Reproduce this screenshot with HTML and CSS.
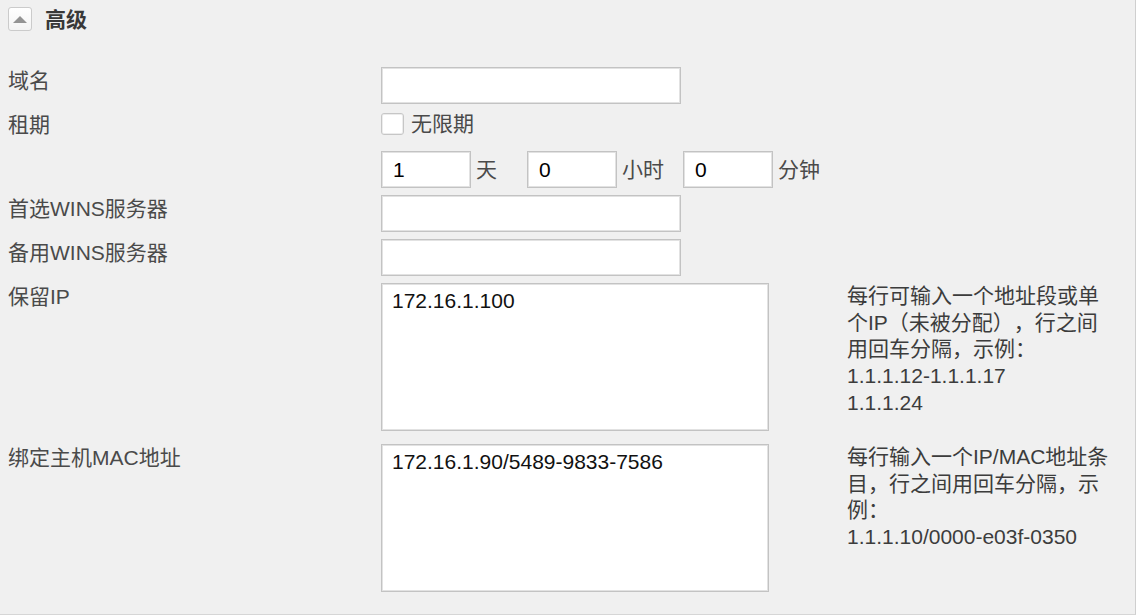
FILE: index.html
```html
<!DOCTYPE html>
<html lang="zh-CN">
<head>
<meta charset="utf-8">
<title>高级</title>
<link rel="stylesheet" href="styles.css">
</head>
<body>
<div class="panel">
  <div class="section-head">
    <span class="toggle"><span class="toggle-arrow"></span></span>
    <span class="section-title">高级</span>
  </div>

  <div class="row row-domain">
    <label class="label">域名</label>
    <div class="control"><input class="field" type="text"></div>
  </div>

  <div class="row row-lease">
    <label class="label">租期</label>
    <div class="control check-line">
      <span class="checkbox"></span>
      <span class="check-text">无限期</span>
    </div>
  </div>

  <div class="row row-time">
    <span class="label"></span>
    <div class="control time-line">
      <input class="field field-short" type="text" value="1">
      <span class="unit unit-day">天</span>
      <input class="field field-short" type="text" value="0">
      <span class="unit unit-hour">小时</span>
      <input class="field field-short" type="text" value="0">
      <span class="unit">分钟</span>
    </div>
  </div>

  <div class="row">
    <label class="label">首选WINS服务器</label>
    <div class="control"><input class="field" type="text"></div>
  </div>

  <div class="row">
    <label class="label">备用WINS服务器</label>
    <div class="control"><input class="field" type="text"></div>
  </div>

  <div class="row">
    <label class="label">保留IP</label>
    <div class="control"><textarea class="area">172.16.1.100</textarea></div>
    <p class="help">每行可输入一个地址段或单个IP（未被分配），行之间用回车分隔，示例：<br>1.1.1.12-1.1.1.17<br>1.1.1.24</p>
  </div>

  <div class="row row-bind">
    <label class="label">绑定主机MAC地址</label>
    <div class="control"><textarea class="area">172.16.1.90/5489-9833-7586</textarea></div>
    <p class="help">每行输入一个IP/MAC地址条目，行之间用回车分隔，示例：<br>1.1.1.10/0000-e03f-0350</p>
  </div>
</div>
</body>
</html>
```

FILE: styles.css
```css
* {
  box-sizing: border-box;
}

html,
body {
  margin: 0;
  padding: 0;
  background: #f0f0f0;
}

body {
  font-family: "Liberation Sans", "Noto Sans CJK SC", sans-serif;
  font-size: 21px;
  line-height: 27px;
  color: #4a4a4a;
  text-spacing-trim: space-all;
}

.panel {
  width: 1136px;
  height: 615px;
  padding: 7px 0 0 8px;
  border-right: 1px solid #cfcfcf;
  border-bottom: 1px solid #d6d6d6;
  display: flex;
  flex-direction: column;
  gap: 7px;
  overflow: hidden;
}

/* collapsible section header */
.section-head {
  display: flex;
  align-items: center;
  gap: 13px;
  height: 24px;
  margin-bottom: 29px;
}

.toggle {
  width: 24px;
  height: 24px;
  border: 1px solid #cbcbcb;
  border-radius: 3px;
  background: linear-gradient(#ffffff, #f3f3f3);
  display: flex;
  align-items: center;
  justify-content: center;
}

.toggle-arrow {
  width: 0;
  height: 0;
  border-left: 7px solid transparent;
  border-right: 7px solid transparent;
  border-bottom: 7px solid #939393;
}

.section-title {
  font-weight: bold;
  color: #383838;
}

/* form rows */
.row {
  display: grid;
  grid-template-columns: 373px 466px 272px;
  align-items: start;
}

.row-lease {
  height: 22px;
  grid-template-rows: 22px;
  align-items: center;
  margin-top: 2px;
}

.row-time {
  margin-top: 9px;
}

.row-bind {
  margin-top: 6px;
}

.label {
  white-space: nowrap;
}

.field {
  display: block;
  width: 300px;
  height: 37px;
  margin: 0;
  padding: 0 11px;
  border: 1px solid #c3c3c3;
  box-shadow: inset 0 0 0 1px #e2e2e2;
  background: #fff;
  font: 21px "Liberation Sans", "Noto Sans CJK SC", sans-serif;
  color: #000;
  outline: none;
}

.area {
  display: block;
  width: 388px;
  height: 148px;
  margin: 0;
  padding: 3px 10px;
  border: 1px solid #c3c3c3;
  box-shadow: inset 0 0 0 1px #e2e2e2;
  background: #fff;
  font: 21px/27px "Liberation Sans", "Noto Sans CJK SC", sans-serif;
  color: #111;
  resize: none;
  outline: none;
  overflow: hidden;
}

/* lease checkbox */
.check-line {
  display: flex;
  align-items: center;
  gap: 7px;
  height: 22px;
}

.checkbox {
  width: 23px;
  height: 22px;
  border: 1px solid #c6c6c6;
  border-radius: 3px;
  background: #fff;
  box-shadow: inset 0 0 0 1px #ececec;
}

.check-text {
  margin-top: -1px;
}

/* lease duration */
.time-line {
  display: flex;
  align-items: center;
}

.field-short {
  width: 90px;
}

.unit {
  margin-left: 5px;
  margin-right: 19px;
}

.unit-day {
  margin-right: 30px;
}

.help {
  width: 270px;
  margin: 0;
  line-height: 26.7px;
  color: #3c3c3c;
  text-spacing-trim: space-all;
}
```
